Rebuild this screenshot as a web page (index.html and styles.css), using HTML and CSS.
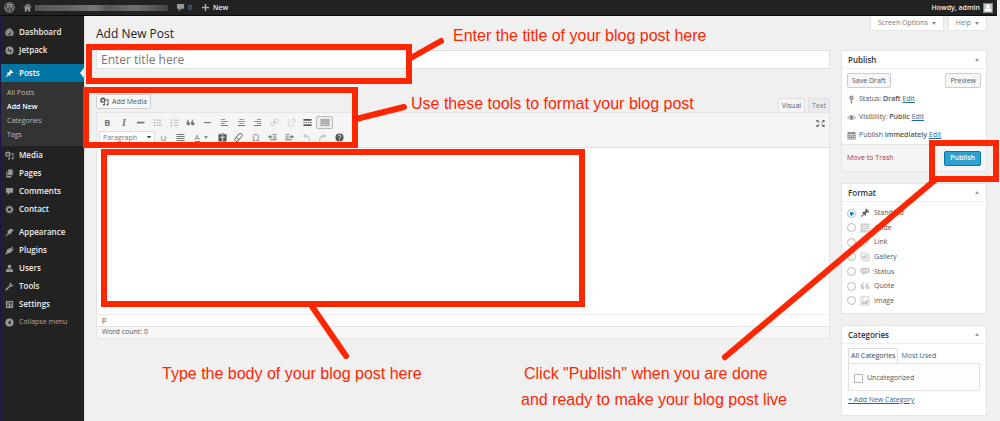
FILE: index.html
```html
<!DOCTYPE html>
<html lang="en">
<head>
<meta charset="utf-8">
<title>Add New Post</title>
<link rel="stylesheet" href="styles.css">
</head>
<body>
<svg class="sprite" aria-hidden="true">
  <symbol id="i-wp" viewBox="0 0 20 20"><circle cx="10" cy="10" r="9" fill="none" stroke="currentColor" stroke-width="1.3"/><circle cx="10" cy="10" r="7.4" fill="currentColor"/><path d="M3.5 6.5 7.4 16 10 8.5 12.7 16 16 6.5M3 6.5h3.5M8 6.5h3.5" fill="none" stroke="#222" stroke-width="1.6"/></symbol>
  <symbol id="i-home" viewBox="0 0 20 20"><path d="M10 1 1 9.5l1.3 1.4L10 3.8l7.7 7.1L19 9.5l-3-2.8V2.5h-2.6v1.7zM10 5.6 4 11v8h4.4v-5h3.2v5H16v-8z"/></symbol>
  <symbol id="i-bubble" viewBox="0 0 20 20"><path d="M4 2h12q2 0 2 2v7q0 2-2 2h-5l-5 6v-6H4q-2 0-2-2V4q0-2 2-2z"/></symbol>
  <symbol id="i-plus" viewBox="0 0 20 20"><path d="M8.3 2h3.4v6.3H18v3.4h-6.3V18H8.3v-6.3H2V8.3h6.3z"/></symbol>
  <symbol id="i-dash" viewBox="0 0 20 20"><path d="M3.5 17A9 9 0 1 1 16.500 17z"/><path d="M10 13 14.500 6M3.500 11.500h2M5 7l1.500 1.200M10 4.500v2M14.500 11.500h2" stroke="#222" stroke-width="1.500" fill="none"/><circle cx="9.800" cy="13.200" r="2.200" fill="#222"/></symbol>
  <symbol id="i-jet" viewBox="0 0 20 20"><circle cx="10" cy="10" r="9"/><path d="M9 4v8l-4-1.200zM11 16V8l4 1.200z" fill="#222"/></symbol>
  <symbol id="i-pin" viewBox="0 0 20 20"><path d="M10.440 3.020l1.820-1.820 6.360 6.350-1.830 1.820c-1.050-.68-2.480-.57-3.410.360l-.75.750c-.92.930-1.040 2.350-.35 3.410l-1.830 1.820-2.410-2.410-2.800 2.790c-.42.420-3.380 2.710-3.800 2.290s1.860-3.390 2.280-3.810l2.790-2.790L4.100 9.360l1.830-1.820c1.050.690 2.480.570 3.400-.36l.75-.75c.93-.920 1.050-2.350.360-3.410z"/></symbol>
  <symbol id="i-media" viewBox="0 0 20 20"><path d="M1 3h2.500l1-1.700h4l1 1.700H12v9H1zM6.500 5a2.500 2.500 0 1 0 0 5 2.500 2.500 0 0 0 0-5z" fill-rule="evenodd"/><path d="M14 5h5v11.500a2.300 2.300 0 1 1-1.800-2.200V8H14zM11 13.500v3.800a2.200 2.200 0 1 1-1.700-2.200v-1.600z"/></symbol>
  <symbol id="i-pages" viewBox="0 0 20 20"><path d="M7 1h10v13H7zM3 5h2.500v10.500H14V19H3z"/></symbol>
  <symbol id="i-gear" viewBox="0 0 20 20"><circle cx="10" cy="10" r="5" fill="none" stroke="currentColor" stroke-width="3"/><path d="M10 1v4M10 15v4M1 10h4M15 10h4M3.600 3.600l2.900 2.900M13.500 13.500l2.900 2.900M3.600 16.400l2.900-2.900M13.500 6.500l2.900-2.900" stroke="currentColor" stroke-width="3"/></symbol>
  <symbol id="i-brush" viewBox="0 0 20 20"><path d="M12 1l7 3-1 3-3 1-1 4-4 2-5-5 2-4 3-1zM6.500 10.500l3 3-3 1.500-4 4q-1.500 0-1.500-1.500l4-4z"/></symbol>
  <symbol id="i-plug" viewBox="0 0 20 20"><path d="M13.100 4.400 16.500 1l1.500 1.500-3.500 3.500 1.800 1.800L19 5l1 1.500-6 7q-3 3.500-7 2L3.500 19 1 18.500 1 16.500 4 13q-1-4 2-6.500z"/></symbol>
  <symbol id="i-user" viewBox="0 0 20 20"><path d="M10 1.500c2.500 0 4 1.700 4 4S12.500 10.500 10 10.500 6 8 6 5.500s1.500-4 4-4zM6 10.500q4 3 8 0 4 1 4 5V18H2v-2.500q0-4 4-5z"/></symbol>
  <symbol id="i-wrench" viewBox="0 0 20 20"><path d="M16.700 9.300c-1.400 1.400-3.500 1.700-5.200 1l-7.300 8q-1.500 1.200-2.700 0t0-2.700l8-7.200c-.7-1.700-.4-3.800 1-5.200 1.500-1.500 3.600-1.700 5.200-1L12.700 5.100l.3 2 2 .300 3-2.900c.700 1.600.200 3.400-1.300 4.800z"/></symbol>
  <symbol id="i-sliders" viewBox="0 0 20 20"><path d="M2 2h16v16H2z"/><path d="M6.500 4v12M13.500 4v12M4 12h5M11 7h5M8.500 6h3" stroke="#222" stroke-width="1.700"/></symbol>
  <symbol id="i-collapse" viewBox="0 0 20 20"><circle cx="10" cy="10" r="9"/><path d="M12.500 5v10L6.500 10z" fill="#222"/></symbol>
  <symbol id="i-list" viewBox="0 0 20 20"><path d="M2 3h3v3H2zM2 9h3v3H2zM2 15h3v3H2zM8 4h11v1.500H8zM8 10h11v1.500H8zM8 16h11v1.500H8z"/></symbol>
  <symbol id="i-numlist" viewBox="0 0 20 20"><path d="M3 1.500h1.500V6H3zM1.500 8.500h3v1.500l-1.500 2h1.500v1h-3zM1.500 14.500h3v4.500h-3v-1h1.500v-2.500h-1.500zM8 4h11v1.500H8zM8 10h11v1.500H8zM8 16h11v1.500H8z"/></symbol>
  <symbol id="i-quote" viewBox="0 0 20 20"><path d="M8.500 3.500Q5 5.500 5 9q4-.500 4 3.500Q9 16.500 5 16.500T1 11.500Q1 5 8 2.500zM18.500 3.500Q15 5.500 15 9q4-.500 4 3.500 0 4-4 4t-4-5Q11 5 18 2.500z"/></symbol>
  <symbol id="i-hr" viewBox="0 0 20 20"><path d="M2 9h16v2.500H2z"/></symbol>
  <symbol id="i-left" viewBox="0 0 20 20"><path d="M2 2h9v2H2zM2 6.500h16v2H2zM2 11h9v2H2zM2 15.500h16v2H2z"/></symbol>
  <symbol id="i-center" viewBox="0 0 20 20"><path d="M5.500 2h9v2h-9zM2 6.500h16v2H2zM5.500 11h9v2h-9zM2 15.500h16v2H2z"/></symbol>
  <symbol id="i-right" viewBox="0 0 20 20"><path d="M9 2h9v2H9zM2 6.500h16v2H2zM9 11h9v2H9zM2 15.500h16v2H2z"/></symbol>
  <symbol id="i-justify" viewBox="0 0 20 20"><path d="M1 2h18v2.200H1zM1 6.500h18v2.200H1zM1 11h18v2.200H1zM1 15.500h18v2.200H1z"/></symbol>
  <symbol id="i-link" viewBox="0 0 20 20"><g fill="none" stroke="currentColor" stroke-width="2" transform="rotate(-45 10 10)"><rect x="0" y="6.500" width="10" height="7" rx="3.500"/><rect x="10" y="6.500" width="10" height="7" rx="3.500"/><path d="M6 10h8"/></g></symbol>
  <symbol id="i-unlink" viewBox="0 0 20 20"><g fill="none" stroke="currentColor" stroke-width="2" transform="rotate(-45 10 10)"><path d="M8 6.500H3.500a3.500 3.500 0 0 0 0 7H8M12 6.500h4.500a3.500 3.500 0 0 1 0 7H12"/></g><path d="M3 3l4 4M13 13l4 4" stroke="currentColor" stroke-width="1.500"/></symbol>
  <symbol id="i-more" viewBox="0 0 20 20"><path d="M1 2h18v4H1zM1 14h18v4H1zM1 9h3v2H1zM6 9h3v2H6zM11 9h3v2h-3zM16 9h3v2h-3z"/></symbol>
  <symbol id="i-sink" viewBox="0 0 20 20"><path d="M0 2h20v16H0z"/><path d="M2 5h16M2 8h16M2 11h16" stroke="#ccc" stroke-width="1" stroke-dasharray="2 1"/><path d="M4 14.500h8M14 14.500h2" stroke="#eee" stroke-width="1.500"/></symbol>
  <symbol id="i-paste" viewBox="0 0 20 20"><path d="M1 3h5l1-2h6l1 2h5v16H1z"/><path d="M5.500 8h9v3h-1.500V10h-2v5h1v1.500H8V15h1v-5H7v1H5.500zM7 3.500h6v1.500H7z" fill="#f5f5f5"/></symbol>
  <symbol id="i-eraser" viewBox="0 0 20 20"><g transform="rotate(-50 10 10)" fill="none" stroke="currentColor" stroke-width="2"><rect x="0" y="6" width="20" height="8" rx="3"/><path d="M7 6v8"/></g></symbol>
  <symbol id="i-outdent" viewBox="0 0 20 20"><path d="M0 8.500 6 4v3h4v3H6v3zM10 2h9v2h-9zM12 6h7v2h-7zM12 10h7v2h-7zM5 14h14v2H5z"/></symbol>
  <symbol id="i-indent" viewBox="0 0 20 20"><path d="M20 8.500 14 4v3h-4v3h4v3zM1 2h9v2H1zM1 6h7v2H1zM1 10h7v2H1zM1 14h14v2H1z"/></symbol>
  <symbol id="i-undo" viewBox="0 0 20 20"><path d="M8 1v4q10 0 10 13h-2.500Q15.500 8.500 8 8.500V12L1.500 6.500z"/></symbol>
  <symbol id="i-redo" viewBox="0 0 20 20"><path d="M12 1v4Q2 5 2 18h2.500q0-9.500 7.500-9.500V12l6.500-5.500z"/></symbol>
  <symbol id="i-help" viewBox="0 0 20 20"><circle cx="10" cy="10" r="9"/><path d="M7 7.500q0-3 3-3t3 2.700q0 1.500-1.500 2.500T10 12.500" fill="none" stroke="#f5f5f5" stroke-width="2"/><circle cx="10" cy="15.200" r="1.300" fill="#f5f5f5"/></symbol>
  <symbol id="i-full" viewBox="0 0 20 20"><path d="M1 2h5L4.500 4 8 7.500 6.500 9 3 5.500 1 7zM19 2h-5l1.500 2L12 7.500 13.500 9 17 5.500 19 7zM1 18h5l-1.500-2L8 12.500 6.500 11 3 14.500 1 13zM19 18h-5l1.500-2-3.500-3.500 1.500-1.500 3.500 3.500L19 13z"/></symbol>
  <symbol id="i-key" viewBox="0 0 20 20"><path d="M10 1a5 5 0 0 1 1.500 9.700V19h-3v-8.300A5 5 0 0 1 10 1zM8.500 4.500v2h3v-2z" fill-rule="evenodd"/></symbol>
  <symbol id="i-eye" viewBox="0 0 20 20"><path d="M1 10.500Q10 1 19 10.500 10 19 1 10.500z" fill="none" stroke="currentColor" stroke-width="1.600"/><circle cx="10" cy="10" r="4"/></symbol>
  <symbol id="i-cal" viewBox="0 0 20 20"><path d="M1 3h3V1h2v2h8V1h2v2h3v16H1zM3 7v2.500h14V7zM3 11v2h2.500v-2zM7.300 11v2h2v-2zM11 11v2h2v-2zM14.500 11v2H17v-2zM3 15v2h2.500v-2zM7.300 15v2h2v-2zM11 15v2h2v-2zM14.500 15v2H17v-2z" fill-rule="evenodd"/></symbol>
  <symbol id="i-code" viewBox="0 0 20 20"><path d="M1 1h18v13l-5 5H1z"/><path d="M3 5.500h14M3 9.500h14M3 13.500h8M13 18v-5h5" stroke="#fff" stroke-width="1.500" fill="none"/></symbol>
  <symbol id="i-gallery" viewBox="0 0 20 20"><path d="M1 1h14v14H1z"/><path d="M17 4v13H4v2h15V4z"/><path d="M3 3h10v10H3z" fill="#fff"/><path d="M4 12V8l2-1 1.500 2L10 4.500l2 3V12z"/></symbol>
  <symbol id="i-chat" viewBox="0 0 20 20"><path d="M4 1.500h12q3.500 0 3.500 3.500v4q0 3.500-3.500 3.500h-5L6 18v-5.500H4Q.5 12.500.5 9V5Q.5 1.500 4 1.500z"/><path d="M4 6h2.500v2.500H4zM8.700 6h2.500v2.500H8.700zM13.500 6H16v2.500h-2.500z" fill="#fff"/></symbol>
  <symbol id="i-image" viewBox="0 0 20 20"><path d="M1 1h18v18H1zM3 3v14h14V3z" fill-rule="evenodd"/><path d="M4 16v-5l3-2 2.500 2.500L13 6l3 4v6z"/><circle cx="6.500" cy="6" r="1.500"/></symbol>
</svg>

<header class="adminbar">
  <a href="#" aria-label="WordPress"><svg class="icon icon-lg"><use href="#i-wp"/></svg></a>
  <a href="#" class="site" aria-label="Visit site"><svg class="icon"><use href="#i-home"/></svg><span class="site-name"></span></a>
  <a href="#" class="count"><svg class="icon"><use href="#i-bubble"/></svg>0</a>
  <a href="#" class="new"><svg class="icon"><use href="#i-plus"/></svg>New</a>
  <a href="#" class="account">Howdy, admin<span class="avatar"><svg class="icon"><use href="#i-user"/></svg></span></a>
</header>

<div class="shell">
  <nav class="menu" aria-label="Admin menu">
    <ul>
      <li><a href="#"><svg class="icon"><use href="#i-dash"/></svg>Dashboard</a></li>
      <li><a href="#"><svg class="icon"><use href="#i-jet"/></svg>Jetpack</a></li>
    </ul>
    <ul>
      <li><a href="#" class="current"><svg class="icon"><use href="#i-pin"/></svg>Posts</a>
        <ul class="submenu">
          <li><a href="#">All Posts</a></li>
          <li><a href="#" class="active">Add New</a></li>
          <li><a href="#">Categories</a></li>
          <li><a href="#">Tags</a></li>
        </ul>
      </li>
      <li><a href="#"><svg class="icon"><use href="#i-media"/></svg>Media</a></li>
      <li><a href="#"><svg class="icon"><use href="#i-pages"/></svg>Pages</a></li>
      <li><a href="#"><svg class="icon"><use href="#i-bubble"/></svg>Comments</a></li>
      <li><a href="#"><svg class="icon"><use href="#i-gear"/></svg>Contact</a></li>
    </ul>
    <ul>
      <li><a href="#"><svg class="icon"><use href="#i-brush"/></svg>Appearance</a></li>
      <li><a href="#"><svg class="icon"><use href="#i-plug"/></svg>Plugins</a></li>
      <li><a href="#"><svg class="icon"><use href="#i-user"/></svg>Users</a></li>
      <li><a href="#"><svg class="icon"><use href="#i-wrench"/></svg>Tools</a></li>
      <li><a href="#"><svg class="icon"><use href="#i-sliders"/></svg>Settings</a></li>
      <li><button type="button" class="collapse"><svg class="icon"><use href="#i-collapse"/></svg>Collapse menu</button></li>
    </ul>
  </nav>

  <main class="content">
    <div class="topline">
      <h1>Add New Post</h1>
      <div class="screen-links">
        <button type="button">Screen Options<span class="down"></span></button>
        <button type="button">Help<span class="down"></span></button>
      </div>
    </div>

    <div class="columns">
      <section class="post">
        <input class="title" type="text" placeholder="Enter title here" aria-label="Post title">
        <div class="editor-head">
          <button type="button" class="btn add-media"><svg class="icon"><use href="#i-media"/></svg>Add Media</button>
          <div class="modes">
            <button type="button" class="mode selected">Visual</button>
            <button type="button" class="mode">Text</button>
          </div>
        </div>
        <div class="editor">
          <div class="toolbar">
            <div class="tools">
              <div class="row row-one">
                <button type="button" class="bold">B</button>
                <button type="button" class="italic">I</button>
                <button type="button" class="strike">ABC</button>
                <button type="button" aria-label="Bulleted list"><svg class="icon soft"><use href="#i-list"/></svg></button>
                <button type="button" aria-label="Numbered list"><svg class="icon soft"><use href="#i-numlist"/></svg></button>
                <button type="button" aria-label="Blockquote"><svg class="icon"><use href="#i-quote"/></svg></button>
                <button type="button" aria-label="Horizontal line"><svg class="icon"><use href="#i-hr"/></svg></button>
                <button type="button" aria-label="Align left"><svg class="icon"><use href="#i-left"/></svg></button>
                <button type="button" aria-label="Align center"><svg class="icon"><use href="#i-center"/></svg></button>
                <button type="button" aria-label="Align right"><svg class="icon"><use href="#i-right"/></svg></button>
                <button type="button" aria-label="Insert link"><svg class="icon off"><use href="#i-link"/></svg></button>
                <button type="button" aria-label="Remove link"><svg class="icon off"><use href="#i-unlink"/></svg></button>
                <button type="button" aria-label="Read more"><svg class="icon dark"><use href="#i-more"/></svg></button>
                <button type="button" class="pressed" aria-label="Toolbar toggle"><svg class="icon soft"><use href="#i-sink"/></svg></button>
              </div>
              <div class="row row-two">
                <select aria-label="Block format"><option>Paragraph</option></select>
                <button type="button" class="underline">U</button>
                <button type="button" aria-label="Justify"><svg class="icon"><use href="#i-justify"/></svg></button>
                <button type="button" class="color"><span class="letter">A</span><span class="down"></span></button>
                <button type="button" aria-label="Paste as text"><svg class="icon dark"><use href="#i-paste"/></svg></button>
                <button type="button" aria-label="Clear formatting"><svg class="icon dark"><use href="#i-eraser"/></svg></button>
                <button type="button" class="omega">Ω</button>
                <button type="button" aria-label="Decrease indent"><svg class="icon"><use href="#i-outdent"/></svg></button>
                <button type="button" aria-label="Increase indent"><svg class="icon"><use href="#i-indent"/></svg></button>
                <button type="button" aria-label="Undo"><svg class="icon off"><use href="#i-undo"/></svg></button>
                <button type="button" aria-label="Redo"><svg class="icon off"><use href="#i-redo"/></svg></button>
                <button type="button" aria-label="Keyboard shortcuts"><svg class="icon dark"><use href="#i-help"/></svg></button>
              </div>
            </div>
            <button type="button" class="full" aria-label="Distraction free"><svg class="icon dark"><use href="#i-full"/></svg></button>
          </div>
          <textarea class="body" aria-label="Post body"></textarea>
          <div class="path">p</div>
          <div class="status">Word count: 0</div>
        </div>
      </section>

      <aside class="side">
        <section class="box">
          <h2>Publish<span class="up"></span></h2>
          <div class="publish">
            <div class="split"><button type="button" class="btn">Save Draft</button><button type="button" class="btn">Preview</button></div>
            <p><svg class="icon"><use href="#i-key"/></svg><span>Status: <b>Draft</b> <a href="#">Edit</a></span></p>
            <p><svg class="icon"><use href="#i-eye"/></svg><span>Visibility: <b>Public</b> <a href="#">Edit</a></span></p>
            <p><svg class="icon"><use href="#i-cal"/></svg><span>Publish <b>immediately</b> <a href="#">Edit</a></span></p>
          </div>
          <div class="actions split"><a href="#" class="trash">Move to Trash</a><button type="button" class="btn primary">Publish</button></div>
        </section>

        <section class="box">
          <h2>Format<span class="up"></span></h2>
          <div class="formats">
            <label><input type="radio" name="format" checked><svg class="icon strong"><use href="#i-pin"/></svg>Standard</label>
            <label><input type="radio" name="format"><svg class="icon"><use href="#i-code"/></svg>Aside</label>
            <label><input type="radio" name="format"><svg class="icon"><use href="#i-link"/></svg>Link</label>
            <label><input type="radio" name="format"><svg class="icon"><use href="#i-gallery"/></svg>Gallery</label>
            <label><input type="radio" name="format"><svg class="icon"><use href="#i-chat"/></svg>Status</label>
            <label><input type="radio" name="format"><svg class="icon"><use href="#i-quote"/></svg>Quote</label>
            <label><input type="radio" name="format"><svg class="icon"><use href="#i-image"/></svg>Image</label>
          </div>
        </section>

        <section class="box">
          <h2>Categories<span class="up"></span></h2>
          <div class="categories">
            <div class="tabs"><button type="button" class="tab selected">All Categories</button><button type="button" class="tab">Most Used</button></div>
            <div class="panel"><label><input type="checkbox">Uncategorized</label></div>
            <a href="#">+ Add New Category</a>
          </div>
        </section>
      </aside>
    </div>
  </main>
</div>

<div class="notes">
  <svg class="marks" width="1000" height="421" viewBox="0 0 1000 421" aria-hidden="true">
    <rect x="89" y="47" width="320" height="34"/>
    <rect x="86" y="90" width="269" height="55"/>
    <rect x="104" y="152" width="478" height="152"/>
    <rect x="932" y="143" width="64" height="36"/>
    <path d="M409 59 441 41M356 119 404 107M311 305 346 356M935 180 725 357"/>
  </svg>
  <p class="note note-title">Enter the title of your blog post here</p>
  <p class="note note-tools">Use these tools to format your blog post</p>
  <p class="note note-body">Type the body of your blog post here</p>
  <p class="note note-publish">Click "Publish" when you are done</p>
  <p class="note note-live">and ready to make your blog post live</p>
</div>
</body>
</html>
```
FILE: styles.css
```css
* { box-sizing: border-box; }
body {
  margin: 0;
  min-height: 100vh;
  display: flex;
  flex-direction: column;
  position: relative;
  background: #f0f0f0;
  color: #555;
  font: 7px/10px "Open Sans", sans-serif;
}
h1, h2, p, ul { margin: 0; padding: 0; font-weight: 400; }
ul { list-style: none; }
a { color: #1f6a93; }
button, input, select, textarea { font: inherit; color: inherit; margin: 0; padding: 0; border: 0; background: none; }
.sprite { position: absolute; width: 0; height: 0; }
.icon { width: 9px; height: 9px; fill: currentColor; flex: none; display: block; }
.icon-lg { width: 11px; height: 11px; }

.adminbar {
  display: flex;
  align-items: center;
  height: 16px;
  margin-right: 3px;
  padding: 0 4px;
  background: #222;
  border-bottom: 1px solid #0a0a0a;
  color: #999;
}
.adminbar a { display: flex; align-items: center; gap: 3px; color: #999; text-decoration: none; }
.adminbar .site { margin-left: 8px; }
.site-name {
  width: 133px;
  height: 6px;
  background: linear-gradient(90deg, #555, #666 30%, #777 45%, #555 55%, #707070 75%, #444);
}
.adminbar .count { margin-left: 8px; }
.adminbar .new { margin-left: 9px; color: #eee; font-weight: 600; }
.new .icon { color: #aaa; }
.adminbar .account { margin-left: auto; color: #eee; font-weight: 600; }
.avatar { background: #c4c4c4; color: #fff; border: 1px solid #888; }
.avatar .icon { width: 8px; height: 8px; }

.shell { display: flex; flex: 1; margin-right: 3px; }
.menu {
  display: flex;
  flex-direction: column;
  gap: 5px;
  width: 84px;
  flex: none;
  padding-top: 7px;
  background: #222;
  border-left: 1px solid #1d1646;
}
.menu a, .collapse {
  display: flex;
  align-items: center;
  gap: 5px;
  width: 100%;
  height: 18px;
  padding-left: 4px;
  color: #eee;
  font-size: 8px;
  font-weight: 600;
  text-decoration: none;
}
.menu .icon { color: #999; }
.menu .collapse { color: #aaa; font-size: 7px; font-weight: 400; }
.menu .current { background: #0074a2; color: #fff; }
.menu .current .icon { color: #fff; }
.current::after {
  content: "";
  margin-left: auto;
  border: 5px solid transparent;
  border-left: 0;
  border-right: 4px solid #f0f0f0;
}
.submenu { padding: 4px 0; background: #333; }
.menu .submenu a { height: 14px; padding-left: 6px; color: #bbb; font-size: 7px; font-weight: 400; }
.menu .submenu .active { color: #fff; font-weight: 600; }

.content { flex: 1; min-width: 0; padding: 0 10px 0 11px; border-left: 1px solid #ddd; }
.topline { display: flex; justify-content: space-between; height: 34px; }
h1 { padding-top: 9px; color: #222; font-size: 12px; line-height: 18px; }
.screen-links { display: flex; align-items: flex-start; gap: 4px; }
.screen-links button {
  display: flex;
  align-items: center;
  gap: 4px;
  height: 15px;
  padding: 0 7px;
  background: #fff;
  border: 1px solid #e5e5e5;
  border-top: 0;
  color: #777;
}
.down { border: 2px solid transparent; border-top: 3px solid #888; border-bottom: 0; }
.up { border: 2px solid transparent; border-bottom: 3px solid #999; border-top: 0; }

.columns { display: grid; grid-template-columns: 1fr 146px; gap: 11px; align-items: start; }
.title {
  display: block;
  width: 100%;
  height: 19px;
  padding: 0 4px;
  background: #fff;
  border: 1px solid #e2e2e2;
  font-size: 12px;
}
.title::placeholder { color: #777; opacity: 1; }
.editor-head { display: flex; justify-content: space-between; align-items: flex-end; padding-top: 25px; }
.btn {
  display: flex;
  align-items: center;
  gap: 3px;
  height: 15px;
  padding: 0 4px;
  background: #f7f7f7;
  border: 1px solid #ccc;
  border-radius: 2px;
  color: #555;
}
.add-media { margin-bottom: 3px; padding: 0 3px; }
.modes { display: flex; gap: 3px; }
.mode { height: 14px; padding: 0 3px; background: #ebebeb; border: 1px solid #e0e0e0; border-bottom: 0; color: #777; }
.mode.selected { background: #f5f5f5; color: #555; }
.editor { border: 1px solid #e5e5e5; background: #fff; }
.toolbar {
  display: flex;
  justify-content: space-between;
  align-items: flex-start;
  padding: 2px;
  background: #f5f5f5;
  border-bottom: 1px solid #e2e2e2;
  color: #777;
}
.row { display: grid; align-items: center; height: 15px; }
.row-one { width: 234px; grid-template-columns: repeat(14, 1fr); }
.row-two { width: 249px; grid-template-columns: 56px 2fr 2fr 3fr repeat(8, 2fr); }
.row button { display: flex; align-items: center; justify-content: center; height: 13px; min-width: 0; }
.bold { font-size: 9px; font-weight: 700; }
.italic { font: italic 700 10px "Liberation Serif", serif; }
.strike { font-size: 4px; text-decoration: line-through; }
.underline { font-size: 8px; text-decoration: underline; }
.row .color { gap: 4px; }
.letter { font-size: 8px; line-height: 8px; border-bottom: 1px solid #777; }
.omega { font-size: 9px; }
.soft { color: #aaa; }
.off { color: #c4c4c4; }
.dark { color: #555; }
.row .pressed { background: #eee; border: 1px solid #bbb; border-radius: 2px; }
.pressed .icon { width: 10px; }
.row select {
  appearance: none;
  width: 56px;
  height: 13px;
  padding: 0 3px;
  border: 1px solid #ddd;
  background:
    linear-gradient(to bottom right, #555 50%, transparent 50%) right 3px center / 2px 3px no-repeat,
    linear-gradient(to bottom left, #555 50%, transparent 50%) right 5px center / 2px 3px no-repeat,
    #fff;
}
.full { padding: 4px 2px; }
.body { display: block; width: 100%; height: 166px; resize: none; outline: 0; background: #fff; }
.path, .status { height: 12px; padding: 0 5px; border-top: 1px solid #eee; }
.status { background: #f7f7f7; border-top-color: #e5e5e5; }

.side { display: grid; gap: 11px; }
.box { background: #fff; border: 1px solid #e5e5e5; }
.box h2 {
  display: flex;
  align-items: center;
  justify-content: space-between;
  height: 18px;
  padding: 0 7px 0 6px;
  border-bottom: 1px solid #eee;
  color: #333;
  font-size: 8px;
  font-weight: 600;
}
.split { display: flex; align-items: center; justify-content: space-between; }
.publish { padding: 4px 5px 0; }
.publish p { display: flex; align-items: center; gap: 3px; height: 18px; }
.publish .split { margin-bottom: 2px; }
.publish .icon { color: #888; }
.publish b { font-weight: 600; }
.actions { height: 27px; padding: 0 5px; background: #f5f5f5; border-top: 1px solid #e5e5e5; }
.trash { color: #a33; text-decoration: none; }
.primary { padding: 0 5px; background: #2ea2cc; border-color: #0074a2; color: #fff; font-weight: 600; }
.formats { display: grid; grid-auto-rows: 1fr; min-height: 102px; margin: 4px 6px 5px 5px; }
.formats label { display: flex; align-items: center; gap: 4px; }
.formats .icon { width: 10px; height: 10px; color: #ccc; }
.formats .strong { color: #666; }
.formats input {
  appearance: none;
  width: 9px;
  height: 9px;
  border: 1px solid #bbb;
  border-radius: 50%;
  background: #fff;
}
.formats input:checked { background: radial-gradient(circle, #1e8cbe 0 2px, #fff 2px); }
.categories { padding: 4px 6px 10px; }
.tabs { display: flex; }
.tab { height: 15px; padding: 0 2px; border: 1px solid transparent; border-bottom: 0; color: #1f6a93; }
.tab.selected { background: #fdfdfd; border-color: #ddd; color: #444; }
.panel { height: 28px; margin-bottom: 4px; padding: 9px 5px; border: 1px solid #e2e2e2; background: #fdfdfd; }
.panel label { display: flex; align-items: center; gap: 4px; }
.panel input { appearance: none; width: 9px; height: 9px; border: 1px solid #bbb; background: #fff; }

/* Annotations drawn over the screen */
.notes { position: absolute; top: 0; left: 0; pointer-events: none; }
.marks { display: block; fill: none; stroke: #ff2600; stroke-width: 6px; stroke-linecap: round; }
.note { position: absolute; white-space: nowrap; color: #ff2600; font: 16px/26px "Liberation Sans", Arial, sans-serif; }
.note-title { left: 453px; top: 23px; }
.note-tools { left: 411px; top: 91px; }
.note-body { left: 162px; top: 361px; }
.note-publish { left: 524px; top: 361px; }
.note-live { left: 521px; top: 387px; }
```
